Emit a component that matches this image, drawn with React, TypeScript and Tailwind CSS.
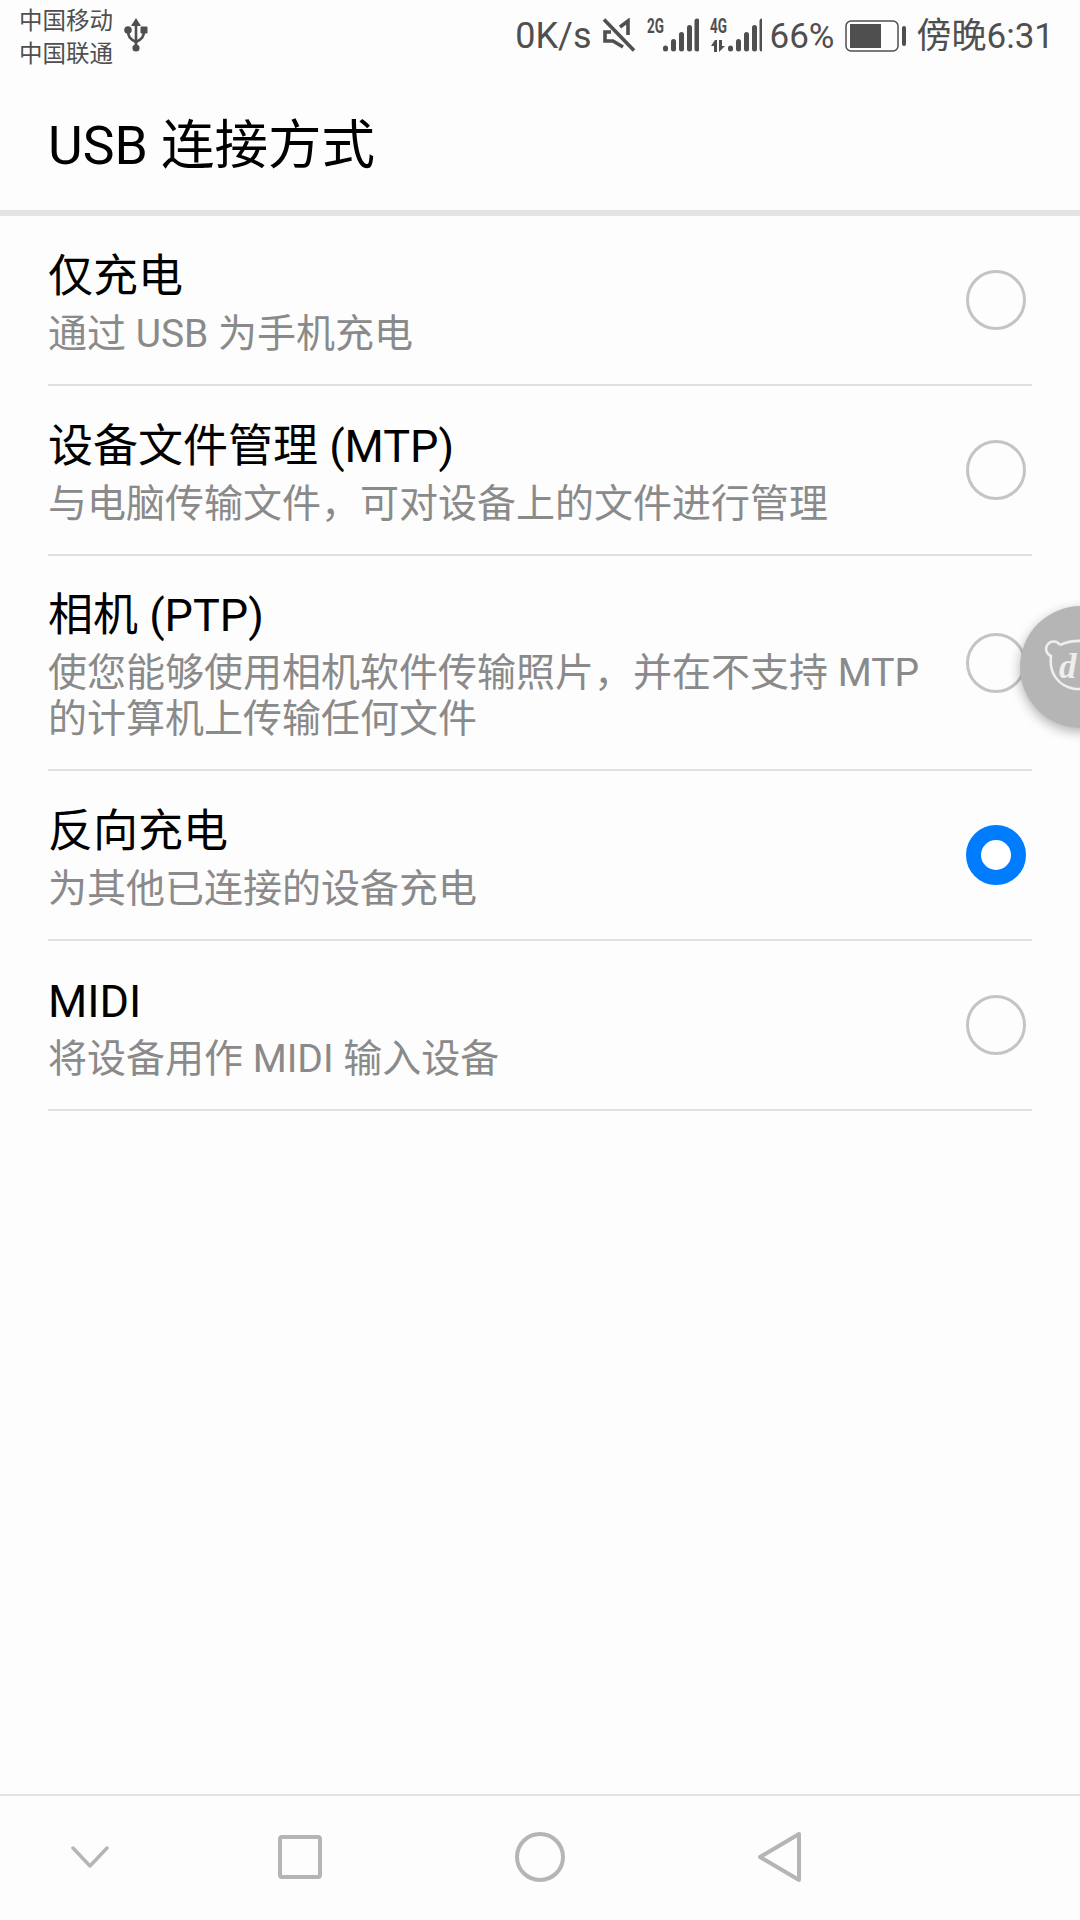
const rows: { t: string; s: React.ReactNode; on?: boolean; h: string }[] = [
  { t: "仅充电", s: "通过 USB 为手机充电", h: "h-[170px]" },
  { t: "设备文件管理 (MTP)", s: "与电脑传输文件，可对设备上的文件进行管理", h: "h-[170px]" },
  { t: "相机 (PTP)", s: <>使您能够使用相机软件传输照片，并在不支持 MTP<br />的计算机上传输任何文件</>, h: "h-[215px]" },
  { t: "反向充电", s: "为其他已连接的设备充电", on: true, h: "h-[170px]" },
  { t: "MIDI", s: "将设备用作 MIDI 输入设备", h: "h-[170px]" },
];

function Bars() {
  const bars = [
    [0, 6],
    [8, 12.5],
    [16, 19.5],
    [24, 26.5],
    [31.5, 33],
  ];
  return (
    <>
      {bars.map(([x, h], i) => (
        <rect key={i} x={x} y={33.5 - h} width="5" height={h} rx="2.5" fill="#4f4f4f" />
      ))}
    </>
  );
}

function Radio({ on }: { on?: boolean }) {
  if (on) return <div className="h-[60px] w-[60px] rounded-full border-[15px] border-[#007dff] bg-white" />;
  return <div className="h-[60px] w-[60px] rounded-full border-[3px] border-[#c4c4c4]" />;
}

export default function App() {
  return (
    <div className="relative flex h-[1920px] w-[1080px] flex-col overflow-hidden bg-[#fdfdfd] font-['Roboto','Noto_Sans_CJK_SC',sans-serif]">
      <div className="flex h-[72px] items-center justify-between pl-[19px] pr-[26px] text-[#4f4f4f]">
        <div className="flex items-center gap-[11px]">
          <div className="pt-[3px] text-[23.5px] leading-[33px]">
            <div>中国移动</div>
            <div>中国联通</div>
          </div>
          <svg width="24" height="36" viewBox="0 0 24 36" fill="none" stroke="#4f4f4f" strokeWidth="2.6">
            <path d="M12 6V32" />
            <path d="M4 12c0 7 2 9 8 12c6-3 8-5 8-12" />
            <path d="M12 0l5 8H7z" fill="#4f4f4f" stroke="none" />
            <circle cx="12" cy="30" r="3.6" fill="#4f4f4f" stroke="none" />
            <circle cx="4" cy="12" r="3.8" fill="#4f4f4f" stroke="none" />
            <rect x="16.5" y="8.5" width="7" height="7" rx="1" fill="#4f4f4f" stroke="none" />
          </svg>
        </div>
        <div className="flex items-center">
          <span className="text-[36px] leading-none">0K/s</span>
          <svg className="ml-[10px]" width="34" height="36" viewBox="0 0 34 36" fill="none" stroke="#4f4f4f" strokeWidth="3.6">
            <path d="M2 1.5l30 31" />
            <path d="M18 9L26 3V17" />
            <path d="M9 14H3V23H11L21 29" />
          </svg>
          <svg className="ml-[11px]" width="52" height="44" viewBox="0 -4 52 44">
            <text x="0" y="15" fontSize="20" fontWeight="700" fill="#4f4f4f" fontFamily="Roboto" textLength="17" lengthAdjust="spacingAndGlyphs">2G</text>
            <g transform="translate(16 0)"><Bars /></g>
          </svg>
          <svg className="ml-[11px]" width="52" height="44" viewBox="0 -4 52 44">
            <text x="0" y="15" fontSize="20" fontWeight="700" fill="#4f4f4f" fontFamily="Roboto" textLength="17" lengthAdjust="spacingAndGlyphs">4G</text>
            <path d="M5 22l-4 6H4v6h3V22zM9 22v12l6-6h-3v-6z" fill="#4f4f4f" />
            <g transform="translate(18 0)"><Bars /></g>
          </svg>
          <span className="ml-[8px] text-[35px] leading-none">66%</span>
          <svg className="ml-[10px]" width="62" height="34" viewBox="0 0 62 34" fill="none">
            <rect x="1" y="2" width="52" height="30" rx="5" stroke="#4f4f4f" strokeWidth="1.5" />
            <rect x="5" y="5" width="31" height="24" fill="#4f4f4f" />
            <rect x="57" y="7" width="4" height="20" rx="2" fill="#4f4f4f" />
          </svg>
          <span className="ml-[10px] text-[35px] leading-none">傍晚6:31</span>
        </div>
      </div>

      <div className="flex h-[138px] items-center px-[48px] pt-[10px] text-[53.5px] text-black">USB 连接方式</div>
      <div className="h-[6px] bg-[#e4e4e4]" />

      <div className="flex-1 px-[48px]">
        {rows.map((r) => (
          <div key={r.t} className={`flex items-center border-b-[2px] border-[#e0e0e0] ${r.h}`}>
            <div className="flex-1">
              <div className="mb-[2px] text-[45px] leading-[65px] text-black">{r.t}</div>
              <div className="text-[39px] leading-[46px] text-[#8a8a8a]">{r.s}</div>
            </div>
            <div className="mr-[6px]"><Radio on={r.on} /></div>
          </div>
        ))}
      </div>

      <div className="absolute left-[1020px] top-[606px] h-[122px] w-[122px] rounded-full bg-[#b5b5b5] shadow-[0_4px_12px_rgba(0,0,0,0.3)]">
        <svg className="absolute left-[20px] top-[24px]" width="60" height="72" viewBox="0 0 60 72" fill="none" stroke="#eeeeee" strokeWidth="2.6">
          <path d="M20 15a7.5 7.5 0 1 0-9 11c-2 16 6 30 24 33h25M20 15C30 10 45 10 60 13" />
          <text x="19" y="48" fontSize="35" fontStyle="italic" fontWeight="700" fill="#eeeeee" stroke="none" fontFamily="Liberation Serif">d</text>
        </svg>
      </div>

      <div className="flex h-[126px] items-center border-t-[2px] border-[#e2e2e2] pb-[2px]">
        <div className="flex w-[180px] justify-center">
          <svg width="38" height="22" viewBox="0 0 38 22" fill="none" stroke="#b5b5b5" strokeWidth="3.5" strokeLinecap="round" strokeLinejoin="round"><path d="M2 2l17 18L36 2" /></svg>
        </div>
        <div className="flex w-[240px] justify-center">
          <svg width="44" height="44" viewBox="0 0 44 44" fill="none" stroke="#b5b5b5" strokeWidth="4"><rect x="2" y="2" width="40" height="40" rx="2" /></svg>
        </div>
        <div className="flex w-[240px] justify-center">
          <svg width="50" height="50" viewBox="0 0 50 50" fill="none" stroke="#b5b5b5" strokeWidth="4"><circle cx="25" cy="25" r="23" /></svg>
        </div>
        <div className="flex w-[240px] justify-center">
          <svg width="44" height="50" viewBox="0 0 44 50" fill="none" stroke="#b5b5b5" strokeWidth="4" strokeLinejoin="round"><path d="M41 2V48L2 25Z" /></svg>
        </div>
      </div>
    </div>
  );
}
